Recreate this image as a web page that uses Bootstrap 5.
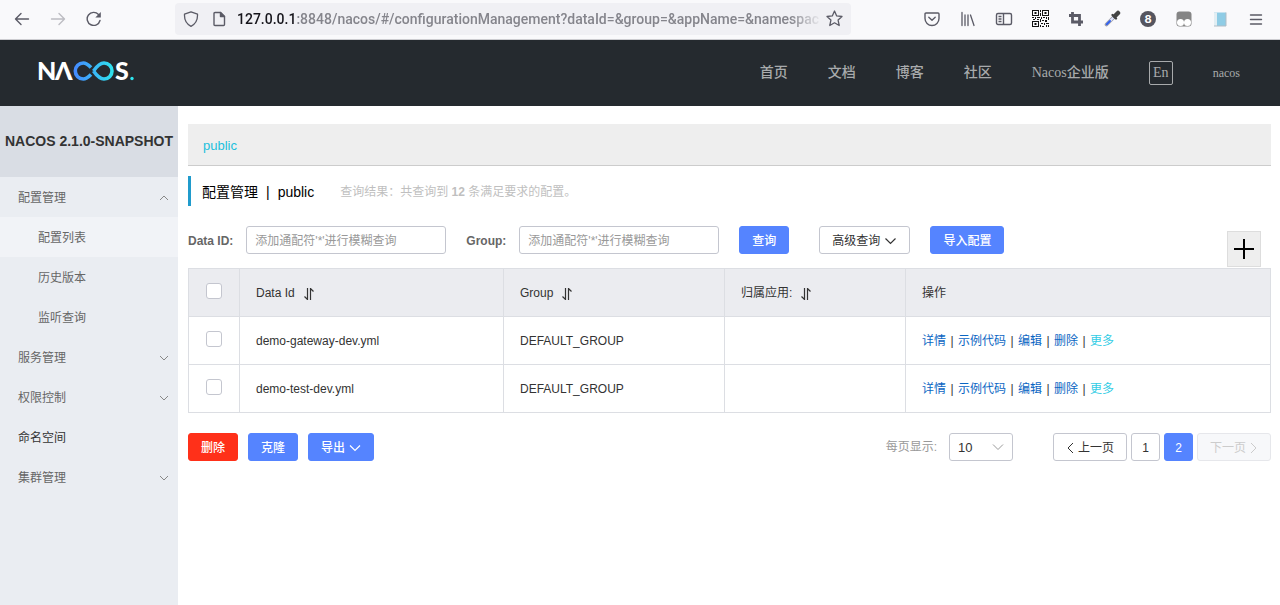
<!DOCTYPE html>
<html lang="zh-CN">
<head>
<meta charset="utf-8">
<meta name="viewport" content="width=device-width, initial-scale=1">
<title>Nacos</title>
<link rel="stylesheet" href="https://cdn.jsdelivr.net/npm/bootstrap@5.3.0/dist/css/bootstrap.min.css">
<style>
body{font-family:"Liberation Sans","Noto Sans CJK SC",sans-serif;font-size:12px;line-height:18px;color:#333}
a{text-decoration:none}
svg{display:block;flex:none}
.browser-bar{height:40px;background:#f9f9fb;border-bottom:1px solid #ccccd0;padding:0 6px 2px 4px;color:#5b5b66}
.tool-btn{flex:none;width:36px;height:32px;padding:0;border:0;background:none;color:inherit;display:flex;align-items:center;justify-content:center}
.tool-btn:disabled{color:#bcbcc2}
.address{margin:0 63px;height:32px;background:#f0f0f4;border-radius:4px;padding:0 8px;min-width:0}
.page-icon{margin:0 10px 0 12px}
.address-text{font-family:Roboto,sans-serif;font-size:14px;font-weight:500;line-height:20px;color:#85858c;white-space:nowrap;overflow:hidden;min-width:0;-webkit-mask-image:linear-gradient(to left,transparent,#000 32px);mask-image:linear-gradient(to left,transparent,#000 32px)}
.address-text b{font-weight:500;color:#15141a}
.top-bar{min-height:66px;background:#252a2f;padding:0 40px 0 38px}
.top-nav{gap:40px;font-family:"Liberation Serif","Noto Sans CJK SC",serif;font-size:14px;font-weight:500;line-height:20px}
.top-nav a{color:#a8aaac}
.lang-btn{width:24px;height:24px;border:1px solid #a8aaac;border-radius:2px;background:none;color:#a8aaac;padding:0;line-height:20px;font-size:14px}
.top-nav .account{font-size:12px}
.sidebar{width:178px;background:#eaedf2;flex:none}
.version{height:71px;background:#d9dde4;font-size:14px;font-weight:700;white-space:nowrap;margin:0}
.menu-link{height:40px;padding:2px 9px 0 18px;color:#666}
.menu-link.sub{padding-left:38px}
.menu-link.active{background:#f1f3f7}
.menu-link.leaf{color:#333}
.menu-link svg{color:#888}
.content{padding:18px 9px 20px 10px;min-width:0}
.space-bar{height:42px;background:#eee;border-bottom:1px solid #ccc;padding:2px 15px 0;font-size:13px}
.space-bar a{color:#1cc0dc}
.page-title{height:30px;border-left:3px solid #209bcc;padding:2px 0 0 11px;margin:10px 0 20px}
.page-title h1{font-size:14px;line-height:20px;font-weight:400;color:#000;margin:0;gap:8px}
.result{color:#bfbfbf;margin-left:26px}
.search-row{min-height:42px}
.search-row label{font-weight:700;color:#666;margin-right:13px;line-height:30px}
.search-row .form-control{width:200px;height:28px;font-size:12px;padding:2px 8px 0;margin-right:20px;border-color:#c4c6cf;border-radius:3px}
.form-control::placeholder{color:#999}
.btn-box{--bs-btn-font-size:12px;--bs-btn-line-height:18px;--bs-btn-border-radius:3px;height:28px;padding:5px 12px 3px;display:inline-flex;align-items:center;justify-content:center;white-space:nowrap;font-weight:500}
.btn-main{--bs-btn-bg:#5584ff;--bs-btn-color:#fff;--bs-btn-border-color:#5584ff;--bs-btn-hover-bg:#3e71f7;--bs-btn-hover-color:#fff}
.btn-warn{--bs-btn-bg:#ff3019;--bs-btn-color:#fff;--bs-btn-border-color:#ff3019;--bs-btn-hover-bg:#e72b00;--bs-btn-hover-color:#fff}
.btn-plain{--bs-btn-bg:#fff;--bs-btn-color:#333;--bs-btn-border-color:#c4c6cf;--bs-btn-disabled-bg:#f7f8fa;--bs-btn-disabled-color:#ccc;--bs-btn-disabled-border-color:#e6e7eb;--bs-btn-disabled-opacity:1;font-weight:400}
.advanced{margin:0 20px 0 30px}
.add-btn{width:34px;height:36px;background:#eee;border:1px solid #ddd;padding:0;color:#000;margin:5px 10px 0 auto}
.config-table{table-layout:fixed;margin-bottom:20px;border-color:#dcdee3;--bs-table-color:#333}
.config-table th,.config-table td{height:48px;padding:0 16px;vertical-align:middle;font-weight:400}
.config-table th{background:#ebecf0}
.config-table .pick{text-align:center;padding:0 0 4px}
.config-table .form-check-input{width:16px;height:16px;margin:0;border-color:#c4c6cf;border-radius:3px;vertical-align:middle}
.col-pick{width:51px}.col-id{width:264px}.col-group{width:221px}.col-app{width:181px}
.sort-icon{margin:3px 0 0 8px}
.row-action{color:#0b66c3}
.row-action.more{color:#33cde5}
.bar{display:inline-block;width:12px;text-align:center}
.bulk{gap:10px}
.size-label{color:#999;margin-right:12px}
.pager{margin-left:40px}
.page-size{width:64px;height:28px;font-size:13px;line-height:18px;padding:2px 24px 0 8px;border-color:#c4c6cf;border-radius:3px;color:#333;background-size:12px 8px;background-position:right 8px center;background-image:url("data:image/svg+xml,%3Csvg xmlns='http://www.w3.org/2000/svg' viewBox='0 0 12 8'%3E%3Cpath d='M1 1.5l5 5 5-5' fill='none' stroke='%23999'/%3E%3C/svg%3E")}
.page-num{padding-left:0;padding-right:0;width:29px}
</style>
</head>
<body class="min-vh-100 d-flex flex-column bg-white">

<div class="browser-bar d-flex align-items-center">
  <button class="tool-btn" aria-label="后退"><svg width="16" height="16" fill="none" stroke="currentColor" stroke-width="1.4" stroke-linecap="round" stroke-linejoin="round"><path d="M14.500 8H1.500M7 2.500L1.500 8L7 13.500"/></svg></button>
  <button class="tool-btn" aria-label="前进" disabled><svg width="16" height="16" fill="none" stroke="currentColor" stroke-width="1.4" stroke-linecap="round" stroke-linejoin="round"><path d="M1.500 8H14.500M9 2.500L14.500 8L9 13.500"/></svg></button>
  <button class="tool-btn" aria-label="刷新"><svg width="16" height="16" fill="none" stroke="currentColor" stroke-width="1.4" stroke-linecap="round"><path d="M14 9.500A6.500 6.500 0 1 1 12.500 3.500"/><path d="M14.800 1V6.500H9.300Z" fill="currentColor" stroke="none"/></svg></button>
  <div class="address d-flex align-items-center flex-grow-1">
    <svg width="16" height="16" fill="none" stroke="#5b5b66" stroke-width="1.3" stroke-linejoin="round"><path d="M8 .8L14.500 3.200C14.800 8.500 13 12.800 8 15.300C3 12.800 1.200 8.500 1.500 3.200Z"/></svg>
    <svg width="16" height="16" class="page-icon" fill="none" stroke="#5b5b66" stroke-width="1.4" stroke-linejoin="round"><path d="M4 1.500H9.500L13.500 5.500V13.500Q13.500 14.500 12.500 14.500H4Q3 14.500 3 13.500V2.500Q3 1.500 4 1.500Z"/><path d="M9.500 1.500V5.500H13.500Z" fill="#5b5b66"/></svg>
    <div class="address-text flex-grow-1"><b>127.0.0.1</b>:8848/nacos/#/configurationManagement?dataId=&amp;group=&amp;appName=&amp;namespac</div>
    <svg class="ms-1" width="17" height="17" viewBox="0 0 17 17" fill="none" stroke="#5b5b66" stroke-width="1.3" stroke-linejoin="round"><path d="M8.500 1L10.700 5.900L16 6.500L12.100 10.100L13.200 15.500L8.500 12.800L3.800 15.500L4.900 10.100L1 6.500L6.300 5.900Z"/></svg>
  </div>
  <button class="tool-btn" aria-label="Pocket"><svg width="16" height="16" fill="none" stroke="currentColor" stroke-width="1.4" stroke-linecap="round" stroke-linejoin="round"><path d="M2 2H14Q15 2 15 3V7.500A7 7 0 0 1 1 7.500V3Q1 2 2 2ZM4.800 6.300L8 9.300L11.200 6.300"/></svg></button>
  <button class="tool-btn" aria-label="书库"><svg width="16" height="16" fill="none" stroke="currentColor" stroke-width="1.3" stroke-linecap="round"><path d="M2 1.500V14.500M5 4V14.500M8 4V14.500M10.500 4L14 14.500"/></svg></button>
  <button class="tool-btn" aria-label="侧栏"><svg width="18" height="16" fill="none" stroke="currentColor" stroke-width="1.4"><rect x="1.500" y="2.500" width="15" height="11" rx="1.500"/><path d="M8.500 2.500V13.500M3.500 5.500H6.500M3.500 8H6.500M3.500 10.500H6.500"/></svg></button>
  <button class="tool-btn" aria-label="二维码"><svg width="17" height="17" viewBox="0 0 17 17" fill="#111"><path fill-rule="evenodd" d="M0 0H7V6H0ZM1 1V5H6V1ZM10 0H17V6H10ZM11 1V5H16V1ZM0 11H7V17H0ZM1 12V16H6V12Z"/><path d="M2.500 2H4.500V4H2.500ZM12.500 2H14.500V4H12.500ZM2.500 13H4.500V15H2.500ZM8 0H9V2H8ZM8 3H9V6H8ZM0 7H2V8H0ZM3 7H4V9H3ZM5 7H8V8H5ZM9 7H10V9H9ZM11 7H13V8H11ZM14 7H15V9H14ZM16 7H17V10H16ZM1 9H3V10H1ZM5 9H7V10H5ZM8 9H9V12H8ZM10 10H12V11H10ZM13 10H15V12H13ZM9 13H11V14H9ZM12 13H13V15H12ZM14 13H17V14H14ZM8 15H9V17H8ZM10 16H12V17H10ZM14 15H15V17H14ZM16 15H17V17H16Z"/></svg></button>
  <button class="tool-btn" aria-label="裁剪"><svg width="16" height="16" fill="none" stroke="currentColor" stroke-width="2.8"><path d="M4.500 1V11H15M1 4.500H11.500V15"/></svg></button>
  <button class="tool-btn" aria-label="取色器"><svg width="17" height="17" viewBox="0 0 17 17" fill="none" stroke-linecap="round"><path d="M2.500 14.500L9.500 7.500" stroke="#9a9aa5" stroke-width="3.600"/><path d="M2.800 14.200L9 8" stroke="#dfe5ff" stroke-width="2"/><path d="M2.800 14.200L6 11" stroke="#315fe8" stroke-width="2"/><path d="M8.500 5L12 8.500" stroke="#444" stroke-width="2.400"/><path d="M11 6L14 3" stroke="#444" stroke-width="4.500"/></svg></button>
  <button class="tool-btn" aria-label="扩展 8"><svg width="16" height="16"><circle cx="8" cy="8" r="8" fill="#55555f"/><text x="8" y="12" text-anchor="middle" font-family="Inter,sans-serif" font-size="11" font-weight="700" fill="#fff">8</text></svg></button>
  <button class="tool-btn" aria-label="脚本管理器"><svg width="16" height="16"><rect x=".5" y=".5" width="15" height="15" rx="3" fill="#858585"/><circle cx="4.500" cy="11.500" r="3.500" fill="#fff"/><circle cx="11.500" cy="11.500" r="3.500" fill="#fff"/></svg></button>
  <button class="tool-btn" aria-label="笔记"><svg width="14" height="16"><rect x="1" y="1.500" width="12" height="13.500" fill="#8fcce5"/><rect x="1" y="1.500" width="3" height="13.500" fill="#e2eef3"/><path d="M13 1.500V15H1" fill="none" stroke="#b1bdc5"/></svg></button>
  <button class="tool-btn" aria-label="菜单"><svg width="14" height="14" fill="none" stroke="currentColor" stroke-width="1.4" stroke-linecap="round"><path d="M1.500 3H12.500M1.500 7.500H12.500M1.500 12H12.500"/></svg></button>
</div>

<header class="top-bar d-flex align-items-center justify-content-between">
  <a href="#" class="pb-1" aria-label="Nacos">
    <svg width="98" height="36" viewBox="0 0 98 36" font-family="Lato,sans-serif" font-weight="900" font-size="25" fill="#fff">
      <defs><linearGradient id="loop" gradientUnits="userSpaceOnUse" x1="36" y1="0" x2="76" y2="0"><stop stop-color="#4589ff"/><stop offset="1" stop-color="#2ee5ee"/></linearGradient></defs>
      <text x="-1" y="27">N</text><text x="17" y="27">Λ</text>
      <path d="M53 14.500C49.500 11 47.500 10 45.300 10A8 8 0 0 0 45.300 26C48 26 50 24.500 53 21.500M55.500 18C59 13 62 10 66 10A8 8 0 0 1 66 26C62 26 59 23 55.500 18" fill="none" stroke="url(#loop)" stroke-width="3.600"/>
      <text x="77" y="27">S</text><circle cx="94" cy="25.500" r="1.700" fill="#2ee5ee"/>
    </svg>
  </a>
  <nav class="top-nav d-flex align-items-center" aria-label="主导航">
    <a href="#">首页</a><a href="#">文档</a><a href="#">博客</a><a href="#">社区</a><a href="#">Nacos企业版</a>
    <button class="lang-btn">En</button>
    <a href="#" class="account">nacos</a>
  </nav>
</header>

<div class="d-flex flex-grow-1">
  <aside class="sidebar">
    <h2 class="version d-flex align-items-center justify-content-center">NACOS 2.1.0-SNAPSHOT</h2>
    <nav class="nav flex-column flex-nowrap" aria-label="侧边菜单">
      <a href="#" class="menu-link d-flex align-items-center justify-content-between">配置管理<svg width="10" height="8" fill="none" stroke="currentColor"><path d="M1 6L5 2L9 6"/></svg></a>
      <a href="#" class="menu-link sub active d-flex align-items-center">配置列表</a>
      <a href="#" class="menu-link sub d-flex align-items-center">历史版本</a>
      <a href="#" class="menu-link sub d-flex align-items-center">监听查询</a>
      <a href="#" class="menu-link d-flex align-items-center justify-content-between">服务管理<svg width="10" height="8" fill="none" stroke="currentColor"><path d="M1 2L5 6L9 2"/></svg></a>
      <a href="#" class="menu-link d-flex align-items-center justify-content-between">权限控制<svg width="10" height="8" fill="none" stroke="currentColor"><path d="M1 2L5 6L9 2"/></svg></a>
      <a href="#" class="menu-link leaf d-flex align-items-center">命名空间</a>
      <a href="#" class="menu-link d-flex align-items-center justify-content-between">集群管理<svg width="10" height="8" fill="none" stroke="currentColor"><path d="M1 2L5 6L9 2"/></svg></a>
    </nav>
  </aside>

  <main class="content flex-grow-1">
    <div class="space-bar d-flex align-items-center"><a href="#">public</a></div>
    <div class="page-title d-flex align-items-center">
      <h1 class="d-flex"><span>配置管理</span><span>|</span><span>public</span></h1>
      <span class="result">查询结果：共查询到 <strong>12</strong> 条满足要求的配置。</span>
    </div>
    <form class="search-row d-flex align-items-start">
      <label for="dataId">Data ID:</label>
      <input id="dataId" type="text" class="form-control" placeholder="添加通配符'*'进行模糊查询">
      <label for="group">Group:</label>
      <input id="group" type="text" class="form-control" placeholder="添加通配符'*'进行模糊查询">
      <button type="button" class="btn btn-box btn-main">查询</button>
      <button type="button" class="btn btn-box btn-plain advanced">高级查询<svg class="ms-1" width="13" height="10" fill="none" stroke="currentColor" stroke-width="1.200"><path d="M1.500 2.500L6.500 7.500L11.500 2.500"/></svg></button>
      <button type="button" class="btn btn-box btn-main">导入配置</button>
      <button type="button" class="add-btn d-flex align-items-center justify-content-center" aria-label="新建配置"><svg width="20" height="20" stroke="currentColor" stroke-width="2"><path d="M10 0V20M0 10H20"/></svg></button>
    </form>

    <table class="table table-bordered config-table">
      <colgroup><col class="col-pick"><col class="col-id"><col class="col-group"><col class="col-app"><col></colgroup>
      <thead>
        <tr>
          <th class="pick"><input type="checkbox" class="form-check-input" aria-label="全选"></th>
          <th><span class="d-flex align-items-center">Data Id<svg class="sort-icon" width="12" height="12" fill="none" stroke="currentColor" stroke-width="1.200"><path d="M4.500 0V11.500L1.500 8.500M7.500 12V.5L10.500 3.500"/></svg></span></th>
          <th><span class="d-flex align-items-center">Group<svg class="sort-icon" width="12" height="12" fill="none" stroke="currentColor" stroke-width="1.200"><path d="M4.500 0V11.500L1.500 8.500M7.500 12V.5L10.500 3.500"/></svg></span></th>
          <th><span class="d-flex align-items-center">归属应用:<svg class="sort-icon" width="12" height="12" fill="none" stroke="currentColor" stroke-width="1.200"><path d="M4.500 0V11.500L1.500 8.500M7.500 12V.5L10.500 3.500"/></svg></span></th>
          <th>操作</th>
        </tr>
      </thead>
      <tbody>
        <tr>
          <td class="pick"><input type="checkbox" class="form-check-input" aria-label="选择 demo-gateway-dev.yml"></td>
          <td>demo-gateway-dev.yml</td><td>DEFAULT_GROUP</td><td></td>
          <td><a href="#" class="row-action">详情</a><span class="bar">|</span><a href="#" class="row-action">示例代码</a><span class="bar">|</span><a href="#" class="row-action">编辑</a><span class="bar">|</span><a href="#" class="row-action">删除</a><span class="bar">|</span><a href="#" class="row-action more">更多</a></td>
        </tr>
        <tr>
          <td class="pick"><input type="checkbox" class="form-check-input" aria-label="选择 demo-test-dev.yml"></td>
          <td>demo-test-dev.yml</td><td>DEFAULT_GROUP</td><td></td>
          <td><a href="#" class="row-action">详情</a><span class="bar">|</span><a href="#" class="row-action">示例代码</a><span class="bar">|</span><a href="#" class="row-action">编辑</a><span class="bar">|</span><a href="#" class="row-action">删除</a><span class="bar">|</span><a href="#" class="row-action more">更多</a></td>
        </tr>
      </tbody>
    </table>

    <div class="d-flex align-items-center justify-content-between">
      <div class="bulk d-flex">
        <button class="btn btn-box btn-warn">删除</button>
        <button class="btn btn-box btn-main">克隆</button>
        <button class="btn btn-box btn-main">导出<svg class="ms-1" width="12" height="10" fill="none" stroke="currentColor" stroke-width="1.200"><path d="M1 2.500L6 7.500L11 2.500"/></svg></button>
      </div>
      <div class="d-flex align-items-center">
        <label for="pageSize" class="size-label">每页显示:</label>
        <select id="pageSize" class="form-select page-size"><option>10</option><option>20</option><option>30</option></select>
        <nav class="pager d-flex gap-1" aria-label="分页">
          <button class="btn btn-box btn-plain"><svg class="me-1" width="8" height="12" fill="none" stroke="currentColor"><path d="M7 1L2 6L7 11"/></svg>上一页</button>
          <button class="btn btn-box btn-plain page-num">1</button>
          <button class="btn btn-box btn-main page-num" aria-current="page">2</button>
          <button class="btn btn-box btn-plain" disabled>下一页<svg class="ms-1" width="8" height="12" fill="none" stroke="currentColor"><path d="M1 1L6 6L1 11"/></svg></button>
        </nav>
      </div>
    </div>
  </main>
</div>
<script src="https://cdn.jsdelivr.net/npm/bootstrap@5.3.0/dist/js/bootstrap.bundle.min.js"></script>
</body>
</html>
